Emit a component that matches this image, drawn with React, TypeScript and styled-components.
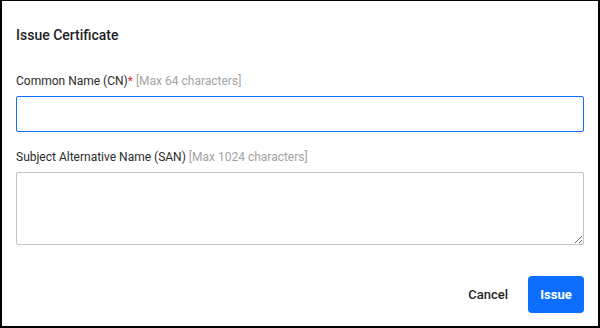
import styled, { createGlobalStyle } from "styled-components";

const GlobalStyle = createGlobalStyle`
  html, body {
    margin: 0;
    padding: 0;
    background: #ffffff;
  }
  body {
    font-family: Roboto, "Liberation Sans", Arial, sans-serif;
    color: #212529;
  }
`;

type FieldProps = {
  label: string;
  hint: string;
  required?: boolean;
  multiline?: boolean;
  focused?: boolean;
};

function Field({ label, hint, required, multiline, focused }: FieldProps) {
  return (
    <FieldWrapper>
      <Label>
        {label}
        {required && <Star>*</Star>} <Hint>[{hint}]</Hint>
      </Label>
      {multiline ? <TextArea /> : <Input $focused={focused} />}
    </FieldWrapper>
  );
}

export default function App() {
  return (
    <>
      <GlobalStyle />
      <Dialog>
        <Title>Issue Certificate</Title>
        <Form>
          <Field label="Common Name (CN)" hint="Max 64 characters" required focused />
          <Field
            label="Subject Alternative Name (SAN)"
            hint="Max 1024 characters"
            multiline
          />
        </Form>
        <Footer>
          <CancelButton>Cancel</CancelButton>
          <PrimaryButton>Issue</PrimaryButton>
        </Footer>
      </Dialog>
    </>
  );
}

const Dialog = styled.div`
  box-sizing: border-box;
  width: 600px;
  height: 328px;
  border: 2px solid #000;
  border-top-width: 1px;
  padding: 24px 14px 0 14px;
  display: flex;
  flex-direction: column;
  background: #fff;
`;

const Title = styled.h2`
  margin: 0;
  font-size: 14px;
  line-height: 20px;
  font-weight: 500;
  color: #1f1f1f;
`;

const Form = styled.div`
  display: flex;
  flex-direction: column;
  gap: 17px;
  margin-top: 28px;
`;

const FieldWrapper = styled.div`
  display: flex;
  flex-direction: column;
  gap: 7px;
`;

const Label = styled.label`
  font-size: 12px;
  line-height: 16px;
  color: #2b2b2b;
`;

const Star = styled.span`
  color: #e0312c;
`;

const Hint = styled.span`
  color: #a3a3a3;
`;

const Input = styled.input<{ $focused?: boolean }>`
  box-sizing: border-box;
  width: 100%;
  height: 36px;
  border: 1px solid ${(p) => (p.$focused ? "#0d6efd" : "#c4c4c4")};
  border-radius: 2px;
  outline: none;
  font: inherit;
`;

const TextArea = styled.textarea`
  box-sizing: border-box;
  width: 100%;
  height: 73px;
  border: 1px solid #c4c4c4;
  border-radius: 2px;
  outline: none;
  font: inherit;
  resize: vertical;
`;

const Footer = styled.div`
  display: flex;
  justify-content: flex-end;
  align-items: center;
  gap: 8px;
  margin-top: 31px;
`;

const CancelButton = styled.button`
  height: 37px;
  padding: 0 12px;
  border: none;
  background: transparent;
  font-family: inherit;
  font-size: 13px;
  font-weight: 500;
  color: #1f1f1f;
`;

const PrimaryButton = styled.button`
  width: 56px;
  height: 37px;
  padding: 0;
  border: none;
  border-radius: 4px;
  background: #0d6efd;
  color: #fff;
  font-family: inherit;
  font-size: 13px;
  font-weight: 700;
`;
